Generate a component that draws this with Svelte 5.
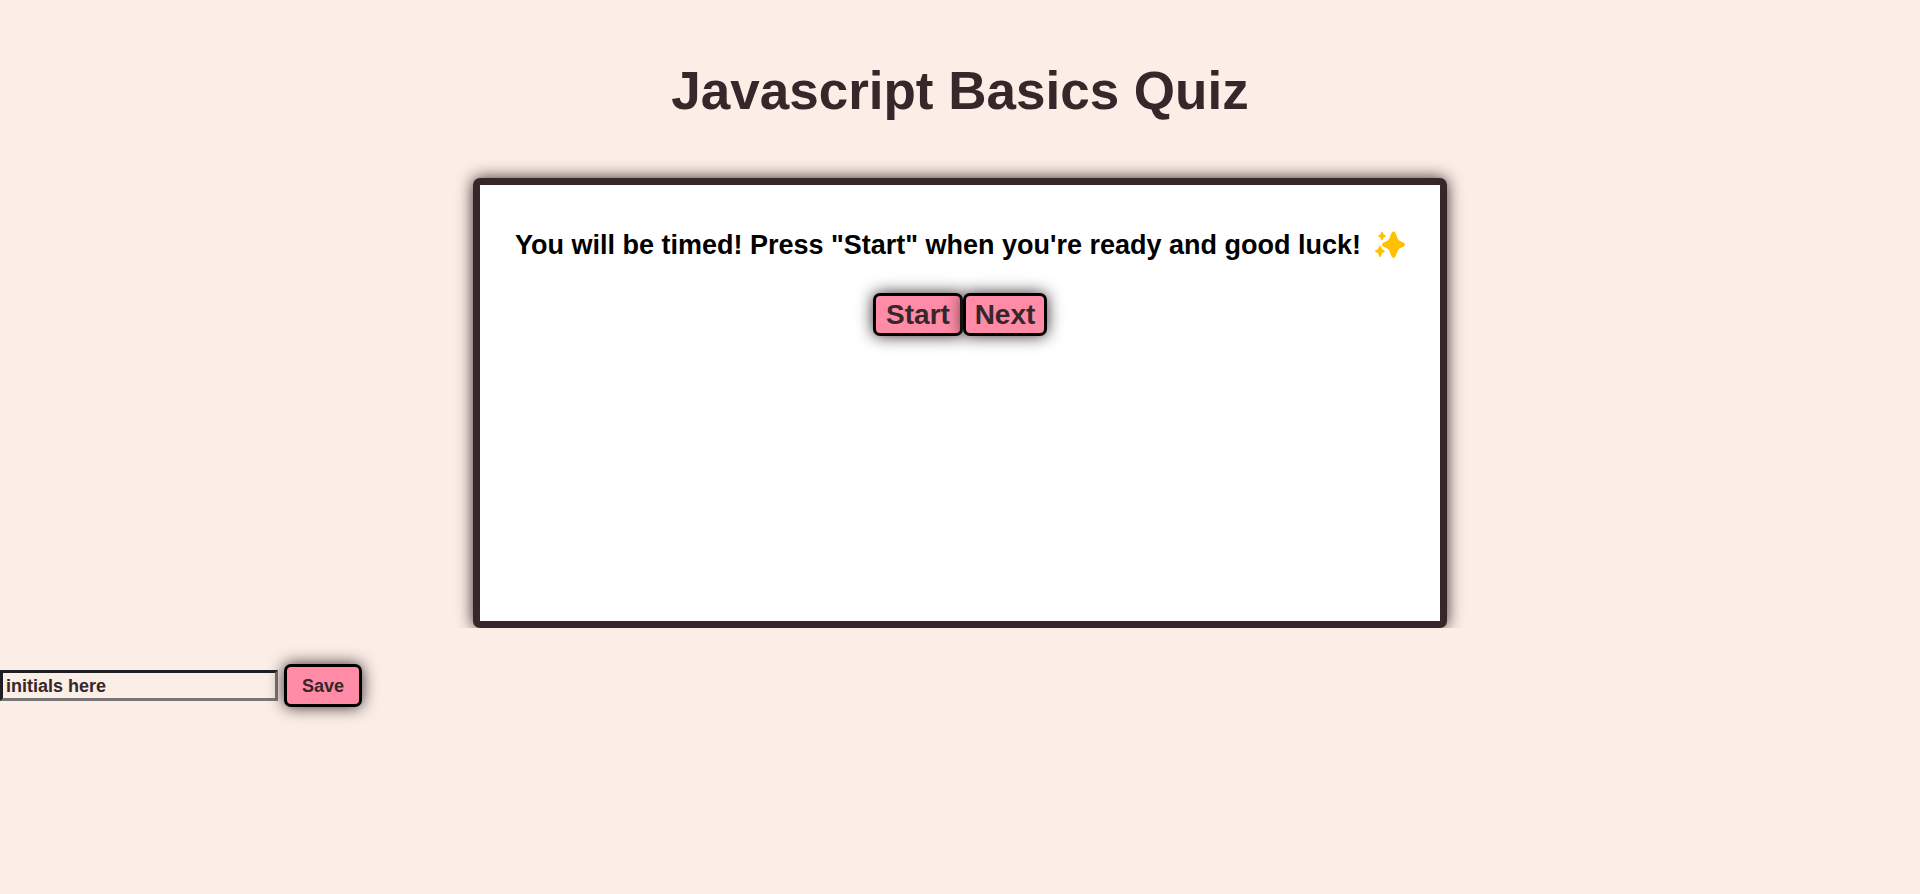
<script>
  let initials = $state('initials here');
</script>

<header>
  <h1>Javascript Basics Quiz</h1>
</header>

<main>
  <section class="card">
    <p>
      <span>You will be timed! Press "Start" when you're ready and good luck!</span>
      <svg width="30" height="28" viewBox="0 0 30 28" aria-hidden="true">
        <g fill="#ffc000">
          <path d="M16.500 2Q18.500 -.800 20.500 2L22.900 8Q23.400 9.300 24.600 9.800L28.800 11.800Q31.200 13.700 28.800 15.600L24.600 17.600Q23.400 18.100 22.900 19.400L20.500 25.600Q18.500 28.400 16.500 25.600L14.100 19.400Q13.600 18.100 12.400 17.600L8.200 15.600Q5.800 13.700 8.200 11.800L12.400 9.800Q13.600 9.300 14.100 8Z" />
          <path d="M6.200 1.300Q7 0 7.800 1.300L8.700 3.400L10.400 4.200Q11.300 5 10.400 5.800L8.700 6.600L7.800 8.700Q7 10 6.200 8.700L5.300 6.600L3.600 5.800Q2.700 5 3.600 4.200L5.300 3.400Z" />
          <path d="M4.200 15.200Q5 13.800 5.800 15.200L7 18.300L9.400 19.500Q10.500 20.300 9.400 21.100L7 22.300L5.800 25.400Q5 26.800 4.200 25.400L3 22.300L.6 21.100Q-.5 20.300 .6 19.500L3 18.300Z" />
        </g>
      </svg>
    </p>
    <div class="actions">
      <button type="button" class="start">Start</button>
      <button type="button" class="next">Next</button>
    </div>
  </section>
</main>

<form onsubmit={(event) => event.preventDefault()}>
  <input type="text" aria-label="Initials" bind:value={initials} />
  <button type="submit" class="save">Save</button>
</form>

<style>
  :global(body) {
    background: #fbeee6;
    color: #35272a;
    font-family: "Liberation Sans", Arial, sans-serif;
    font-weight: 700;
  }

  header {
    padding: 60px 0 56px;
    text-align: center;
  }

  h1 {
    margin: 0;
    font-size: 53px;
    line-height: 62px;
  }

  .card {
    box-sizing: content-box;
    width: 50%;
    min-height: 436px;
    margin: 0 auto;
    border: 7px solid #35272a;
    border-radius: 7px;
    background: #fff;
    box-shadow: 0 0 16px #35272a;
  }

  p {
    display: flex;
    justify-content: center;
    align-items: center;
    gap: 14px;
    margin: 0;
    padding: 44px 0 32px;
    color: #000;
    font-size: 27px;
    line-height: 32px;
  }

  svg {
    flex: none;
  }

  .actions {
    display: flex;
    justify-content: center;
  }

  button {
    box-sizing: border-box;
    height: 43px;
    padding: 0;
    border: 3px solid #000;
    border-radius: 7px;
    background: #ff8ba7;
    color: #35272a;
    font: inherit;
    font-size: 28px;
    box-shadow: 0 0 16px #35272a;
  }

  .start {
    width: 90px;
  }

  .next {
    width: 84px;
  }

  form {
    position: relative;
    display: flex;
    align-items: center;
    gap: 6px;
    padding: 36px 0;
    background: #fbeee6;
  }

  input {
    box-sizing: border-box;
    width: 278px;
    height: 31px;
    padding: 2px 3px 0;
    border: 3px solid;
    border-color: #1f1f23 #767676 #767676 #1f1f23;
    background: transparent;
    color: #35272a;
    font: inherit;
    font-size: 18px;
  }

  .save {
    width: 78px;
    padding-top: 2px;
    font-size: 18px;
  }
</style>
